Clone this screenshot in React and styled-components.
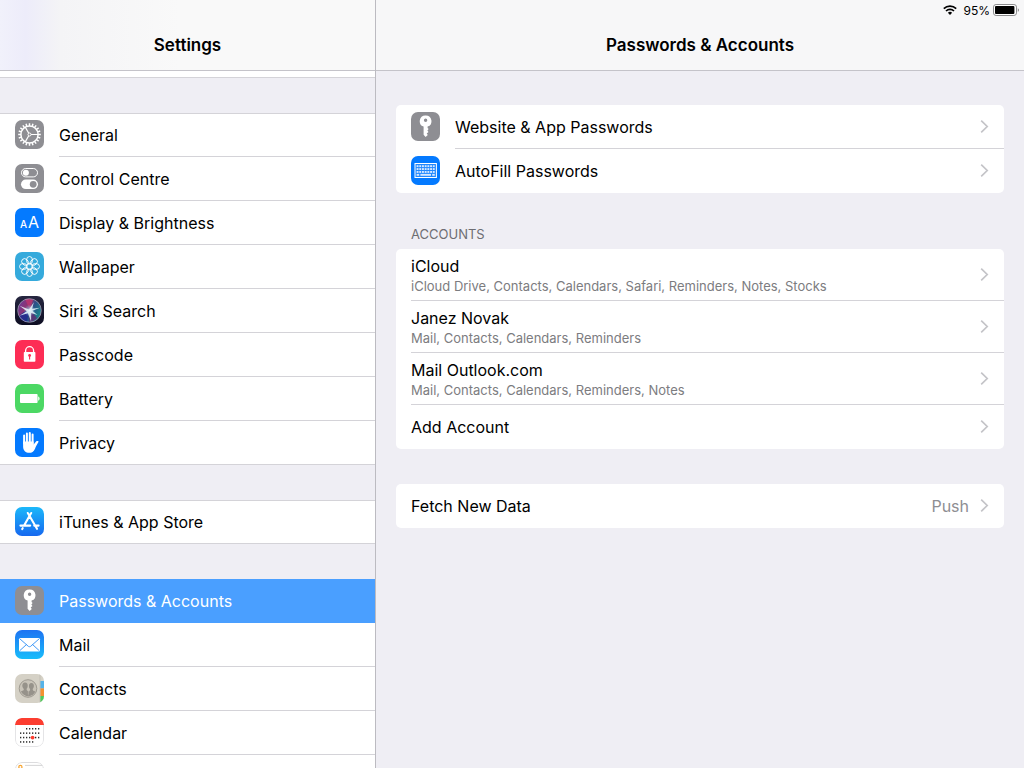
import React, { useState } from 'react'
import styled, { createGlobalStyle } from 'styled-components'

const GlobalStyle = createGlobalStyle`
  * {
    box-sizing: border-box;
  }
  body {
    margin: 0;
    background: #efeef4;
    color: #000;
    font-family: Inter, "Liberation Sans", sans-serif;
    font-size: 16px;
  }
  h1, h2, h3, p, ul {
    margin: 0;
    padding: 0;
  }
  ul {
    list-style: none;
  }
`

/* ---------- icons ---------- */

const range = (n) => Array.from({ length: n }, (_, i) => i)

const IconSvg = styled.svg`
  display: block;
  flex: none;
  width: 29px;
  height: 29px;
  margin-bottom: 1px;
  border-radius: 7px;
`

const Icon = ({ bg, children }) => (
  <IconSvg viewBox="0 0 29 29" aria-hidden="true">
    <rect width="29" height="29" fill={bg} />
    {children}
  </IconSvg>
)

const GeneralIcon = () => (
  <Icon bg="#8e8e93">
    <g stroke="#fff" fill="none">
      <circle cx="14.5" cy="14.5" r="8.6" strokeWidth="1.5" />
      {range(20).map((i) => (
        <path key={i} d="M14.5 3.2v2.8" strokeWidth="1.5" transform={`rotate(${i * 18} 14.5 14.5)`} />
      ))}
      <circle cx="14.5" cy="14.5" r="1.5" strokeWidth="1" />
      {[90, 210, 330].map((a) => (
        <path key={a} d="M14.5 13V6" strokeWidth="1.2" transform={`rotate(${a} 14.5 14.5)`} />
      ))}
    </g>
  </Icon>
)

const ControlIcon = () => (
  <Icon bg="#8e8e93">
    <rect x="6.5" y="4.5" width="16" height="8.4" rx="4.2" fill="none" stroke="#fff" strokeWidth="1" />
    <circle cx="10.9" cy="8.7" r="3" fill="#fff" />
    <rect x="6" y="15.5" width="17" height="9.6" rx="4.8" fill="#fff" />
    <circle cx="18.2" cy="20.3" r="3.4" fill="#8e8e93" />
  </Icon>
)

const DisplayIcon = () => (
  <Icon bg="#047aff">
    <g fill="#fff" fontFamily="Inter, sans-serif">
      <text x="5" y="20" fontSize="10" fontWeight="500">A</text>
      <text x="13" y="20" fontSize="16" fontWeight="400">A</text>
    </g>
  </Icon>
)

const WallpaperIcon = () => (
  <Icon bg="#35aadc">
    <g stroke="#fff" strokeWidth="0.9" fill="none">
      {range(8).map((i) => (
        <ellipse key={i} cx="14.5" cy="8.3" rx="3" ry="3.8" transform={`rotate(${i * 45} 14.5 14.5)`} />
      ))}
      <circle cx="14.5" cy="14.5" r="3" />
    </g>
  </Icon>
)

const SiriIcon = () => (
  <IconSvg viewBox="0 0 29 29" aria-hidden="true">
    <defs>
      <linearGradient id="siriBg" x1="0" y1="0" x2="0" y2="1">
        <stop offset="0" stopColor="#262740" />
        <stop offset="1" stopColor="#0d0d22" />
      </linearGradient>
      <radialGradient id="siriCore">
        <stop offset="0" stopColor="#fff" />
        <stop offset="0.3" stopColor="#c9e6f5" stopOpacity="0.6" />
        <stop offset="1" stopColor="#7fb4e0" stopOpacity="0" />
      </radialGradient>
      <linearGradient id="siriOrb" x1="0" y1="0.2" x2="1" y2="0.7">
        <stop offset="0" stopColor="#6a3a98" />
        <stop offset="0.35" stopColor="#8f3470" />
        <stop offset="0.6" stopColor="#2a5088" />
        <stop offset="1" stopColor="#178f8c" />
      </linearGradient>
    </defs>
    <rect width="29" height="29" fill="url(#siriBg)" />
    <circle cx="14.5" cy="14.5" r="11.5" fill="url(#siriOrb)" />
    <path d="M14 14C10 15 5 18 4 21a11.5 11.5 0 0 0 8 5z" fill="#1c2c90" opacity="0.85" />
    <path d="M15 14l3-10a11.5 11.5 0 0 0-8-1z" fill="#c2356f" opacity="0.75" />
    <path d="M15 14l7 8a11.5 11.5 0 0 1-8 4z" fill="#6a2870" opacity="0.75" />
    <circle cx="14.5" cy="14.5" r="6" fill="url(#siriCore)" />
    <path d="M14 13.4L4.5 9.8l7.4 5.4-7.4 4.6 8.4-2.6 3.2 8.4.1-8.6 6.2 2-5-4.2 7.6-3-7.8 1 1.6-6.6z" fill="#e6f7fa" opacity="0.85" />
    <circle cx="14.5" cy="14.5" r="11.8" fill="none" stroke="#b6adc9" strokeWidth="0.7" />
  </IconSvg>
)

const PasscodeIcon = () => (
  <Icon bg="#fd2d55">
    <path d="M10.6 13v-2.3a4 4 0 0 1 8 0V13" fill="none" stroke="#fff" strokeWidth="1.3" />
    <rect x="8.8" y="12" width="11.6" height="9.8" rx="0.8" fill="#fff" />
    <circle cx="14.6" cy="15.5" r="1.4" fill="#fd2d55" />
    <path d="M14.6 15.5v4" stroke="#fd2d55" strokeWidth="1.1" />
  </Icon>
)

const BatteryAppIcon = () => (
  <Icon bg="#4cd864">
    <rect x="5" y="10" width="17.6" height="9" rx="1" fill="#fff" />
    <path d="M23.2 12.4c1.8.3 1.8 3.9 0 4.2z" fill="#fff" />
  </Icon>
)

const PrivacyIcon = () => (
  <Icon bg="#047aff">
    <g stroke="#fff" strokeWidth="2" strokeLinecap="round">
      <path d="M9.1 7.6v8M11.9 5.4v9M14.8 5v9M17.6 6.4v9" />
    </g>
    <path
      d="M8.1 13.4h10.5v3.2l2.5-3.2c.9-.9 2.6-.5 2.5.3-1.4 2-2.7 4.8-3.7 7.2-1.2 2.7-3.2 3.9-5.6 3.9-3.6 0-6.2-2.2-6.2-6.4z"
      fill="#fff"
    />
  </Icon>
)

const StoreIcon = () => (
  <IconSvg viewBox="0 0 29 29" aria-hidden="true">
    <defs>
      <linearGradient id="storeBg" x1="0" y1="0" x2="0" y2="1">
        <stop offset="0" stopColor="#1cb8fa" />
        <stop offset="1" stopColor="#1668ef" />
      </linearGradient>
    </defs>
    <rect width="29" height="29" fill="url(#storeBg)" />
    <g stroke="#fff" strokeWidth="2.1" strokeLinecap="round" fill="none">
      <path d="M16.2 6L9.2 18.2M12.8 6l9.2 15.8M5.4 18.6h9.8M19.2 18.6h4.4M7.7 21.2l-.5.9" />
    </g>
  </IconSvg>
)

const KeyIcon = () => (
  <Icon bg="#8e8e93">
    <path
      fill="#fff"
      fillRule="evenodd"
      d="M14.6 3.5a5.7 5.7 0 0 0-2 11.1v8.2l2 2.2 2.2-2-1.1-1.4 1.8-1.7-1.1-1.5 1.2-1.3-1-1.2v-1.3a5.7 5.7 0 0 0-2-11.1zm0 3a1.7 1.7 0 1 1 0 3.4 1.7 1.7 0 0 1 0-3.4z"
    />
  </Icon>
)

const MailIcon = () => (
  <IconSvg viewBox="0 0 29 29" aria-hidden="true">
    <defs>
      <linearGradient id="mailBg" x1="0" y1="0" x2="0" y2="1">
        <stop offset="0" stopColor="#1e73f2" />
        <stop offset="1" stopColor="#18bdfb" />
      </linearGradient>
    </defs>
    <rect width="29" height="29" fill="url(#mailBg)" />
    <rect x="4" y="8" width="21" height="13.4" rx="1.2" fill="#fff" />
    <path d="M4.6 8.6l8.6 7.6c.8.7 1.8.7 2.6 0l8.6-7.6M4.6 20.8l7-6.4M24.4 20.8l-7-6.4" fill="none" stroke="#2c8df5" strokeWidth="0.9" />
  </IconSvg>
)

const ContactsIcon = () => (
  <Icon bg="#d5d1c6">
    <rect x="25.2" y="7" width="3.8" height="7.4" fill="#56b3e8" />
    <rect x="25.2" y="14.4" width="3.8" height="7.6" fill="#f39130" />
    <rect x="25.2" y="22" width="3.8" height="7" fill="#4fcb5b" />
    <path d="M25 0v29" stroke="#bdb9af" strokeWidth="0.7" />
    <circle cx="13" cy="14.5" r="8.8" fill="#c9c4b9" stroke="#98948b" strokeWidth="0.9" />
    <g fill="#96928a">
      <path d="M10 8.4c2 0 2.9 1.5 2.8 3.2 0 1.5-.5 2.6-1.2 3.2 0 1.6.2 1.7 2 2.6v4.9c-3.2 0-6-1.5-7.7-4.7l2.6-1.3c.4-.2.4-.8.1-1.6-.8-.7-1.3-1.8-1.3-3.1 0-1.8 1-3.2 2.7-3.2z" />
      <path d="M16.3 8.9c1.8 0 2.6 1.3 2.6 2.9 0 1.4-.5 2.5-1.2 3.1 0 1.3.2 1.6 2.7 2.6-1.5 2.9-3.8 4.6-7.1 4.8v-4.6c1.6-.8 1.8-1.3 1.8-2.7-.7-.6-1.2-1.7-1.2-3 0-1.8.8-3.1 2.4-3.1z" />
    </g>
    <path d="M13.3 9.6v11" stroke="#c9c4b9" strokeWidth="0.5" />
  </Icon>
)

// start and end columns of each week in the small month grid
const weeks = [[2, 7], [0, 7], [0, 7], [0, 5]]

const CalendarIcon = () => (
  <Icon bg="#fff">
    <rect x="0.5" y="0.5" width="28" height="28" rx="6.5" fill="none" stroke="#e4e4e6" strokeWidth="1" />
    <path d="M0 7V6a6 6 0 0 1 6-6h17a6 6 0 0 1 6 6v1z" fill="#fc3d30" />
    {weeks.map(([from, to], row) =>
      range(to - from).map((i) => (
        <rect key={`${row}-${i}`} x={5 + (from + i) * 3} y={10 + row * 4.4} width="1.3" height="1.5" fill="#2b2b2b" />
      ))
    )}
    <circle cx="17.6" cy="19.6" r="1.9" fill="#fc3d30" />
  </Icon>
)

const NotesIcon = () => (
  <Icon bg="#fff">
    <rect x="0.5" y="0.5" width="28" height="28" rx="6.5" fill="none" stroke="#dcdcde" strokeWidth="1" />
    <circle cx="5.4" cy="5" r="1.6" fill="none" stroke="#f7a531" strokeWidth="1.2" />
    <path d="M10 3.4h17" stroke="#c9c9cc" strokeWidth="0.8" />
  </Icon>
)

const KeyboardIcon = () => (
  <Icon bg="#047aff">
    <rect x="4" y="7.5" width="21.4" height="14" fill="#2088ff" stroke="#fff" strokeWidth="1" />
    <g fill="#d6e8ff">
      {range(3).map((row) =>
        range(7).map((i) => (
          <rect key={`${row}-${i}`} x={5.6 + i * 2.7} y={9.2 + row * 2.9} width="1.9" height="1.9" />
        ))
      )}
      <rect x="5.6" y="17.9" width="2.6" height="1.9" />
      <rect x="9.4" y="17.9" width="10.6" height="1.9" />
      <rect x="21.2" y="17.9" width="2.6" height="1.9" />
    </g>
  </Icon>
)

const ChevronSvg = styled.svg`
  display: block;
  flex: none;
  width: 9px;
  height: 13px;
`

const Chevron = () => (
  <ChevronSvg viewBox="0 0 9 13" aria-hidden="true">
    <path d="M1.2 0.7L7.2 6.5l-6 5.8" fill="none" stroke="#c4c4c8" strokeWidth="1.7" />
  </ChevronSvg>
)

const WifiIcon = () => (
  <svg width="14" height="10" viewBox="0 0 14 10" aria-hidden="true">
    <g fill="none" stroke="#000" strokeWidth="1.7">
      <path d="M0.8 3.7a9 9 0 0 1 12.4 0" />
      <path d="M3 6a5.8 5.8 0 0 1 8 0" />
    </g>
    <path d="M4.9 7.8a3 3 0 0 1 4.2 0L7 10z" />
  </svg>
)

const BatteryStatus = () => (
  <svg width="27" height="12" viewBox="0 0 27 12" aria-hidden="true">
    <rect x="0.5" y="0.5" width="23" height="11" rx="2.6" fill="#fff" stroke="#8b8b8d" strokeWidth="1" />
    <rect x="2" y="2" width="19.4" height="8" rx="1" />
    <path d="M24.8 4.2c1.6.4 1.6 3.2 0 3.6z" fill="#8b8b8d" />
  </svg>
)

/* ---------- data ---------- */

const menu = [
  [
    { name: 'General', Glyph: GeneralIcon },
    { name: 'Control Centre', Glyph: ControlIcon },
    { name: 'Display & Brightness', Glyph: DisplayIcon },
    { name: 'Wallpaper', Glyph: WallpaperIcon },
    { name: 'Siri & Search', Glyph: SiriIcon },
    { name: 'Passcode', Glyph: PasscodeIcon },
    { name: 'Battery', Glyph: BatteryAppIcon },
    { name: 'Privacy', Glyph: PrivacyIcon },
  ],
  [{ name: 'iTunes & App Store', Glyph: StoreIcon }],
  [
    { name: 'Passwords & Accounts', Glyph: KeyIcon },
    { name: 'Mail', Glyph: MailIcon },
    { name: 'Contacts', Glyph: ContactsIcon },
    { name: 'Calendar', Glyph: CalendarIcon },
    { name: 'Notes', Glyph: NotesIcon, iconOnly: true },
  ],
]

const passwords = [
  { name: 'Website & App Passwords', Glyph: KeyIcon },
  { name: 'AutoFill Passwords', Glyph: KeyboardIcon },
]

const accounts = [
  { name: 'iCloud', detail: 'iCloud Drive, Contacts, Calendars, Safari, Reminders, Notes, Stocks' },
  { name: 'Janez Novak', detail: 'Mail, Contacts, Calendars, Reminders' },
  { name: 'Mail Outlook.com', detail: 'Mail, Contacts, Calendars, Reminders, Notes' },
  { name: 'Add Account' },
]

const CardRow = ({ name, detail, value, Glyph }) => (
  <Row href="#">
    {Glyph && <Glyph />}
    <RowBody $tall={Boolean(detail)}>
      <RowText>
        <RowTitle>{name}</RowTitle>
        {detail && <RowDetail>{detail}</RowDetail>}
      </RowText>
      {value && <RowValue>{value}</RowValue>}
      <Chevron />
    </RowBody>
  </Row>
)

const App = () => {
  const [active, setActive] = useState('Passwords & Accounts')

  return (
    <Container>
      <GlobalStyle />
      <Sidebar>
        <Header $tinted>
          <StatusBar />
          <Title>Settings</Title>
        </Header>
        <MenuScroll>
          <MenuTail />
          {menu.map((group, i) => (
            <MenuGroup key={i}>
              {group.map(({ name, Glyph, iconOnly }) => (
                <li key={name}>
                  <MenuLink href="#" aria-label={name} $active={name === active} onClick={() => setActive(name)}>
                    <Glyph />
                    <MenuLabel>{!iconOnly && name}</MenuLabel>
                  </MenuLink>
                </li>
              ))}
            </MenuGroup>
          ))}
        </MenuScroll>
      </Sidebar>
      <Detail>
        <Header>
          <StatusBar>
            <WifiIcon />
            <Charge>95%</Charge>
            <BatteryStatus />
          </StatusBar>
          <Title>Passwords &amp; Accounts</Title>
        </Header>
        <Content>
          <Card>
            {passwords.map((item) => <CardRow key={item.name} {...item} />)}
          </Card>
          <section>
            <CardHeading>ACCOUNTS</CardHeading>
            <Card>
              {accounts.map((item) => <CardRow key={item.name} {...item} />)}
            </Card>
          </section>
          <Card $spaced>
            <CardRow name="Fetch New Data" value="Push" />
          </Card>
        </Content>
      </Detail>
    </Container>
  )
}

const Container = styled.div`
  display: grid;
  grid-template-columns: minmax(240px, 376px) 1fr;
  height: 100vh;
  overflow: hidden;
`

const Sidebar = styled.nav`
  display: flex;
  flex-direction: column;
  min-height: 0;
  border-right: 1px solid #bcbbc1;
`

const Detail = styled.main`
  display: flex;
  flex-direction: column;
  min-width: 0;
  min-height: 0;
`

const Header = styled.header`
  flex: none;
  border-bottom: 1px solid #c4c3c9;
  background: ${({ $tinted }) =>
    $tinted ? 'linear-gradient(90deg, #f1f1fb 0, #edecfa 26px, #f4f4f6 60px, #f9f9f9 180px)' : '#f7f7f8'};
`

const StatusBar = styled.div`
  display: flex;
  align-items: center;
  justify-content: flex-end;
  gap: 6px;
  height: 20px;
  padding: 0 4px;
`

const Charge = styled.span`
  margin-right: -3px;
  font-size: 12px;
`

const Title = styled.h1`
  font-size: 17px;
  font-weight: 600;
  line-height: 50px;
  text-align: center;
`

const MenuScroll = styled.div`
  flex: 1;
  min-height: 0;
  overflow: hidden;
`

const MenuTail = styled.div`
  height: 7px;
  background: #fff;
  border-bottom: 1px solid #d4d3d8;
`

const MenuGroup = styled.ul`
  margin-top: 35px;
  background: #fff;
  box-shadow: inset 0 1px #d4d3d8, inset 0 -1px #d4d3d8;
`

const MenuLabel = styled.span`
  flex: 1;
  height: 44px;
  line-height: 45px;
  border-bottom: 1px solid #d4d3d8;
`

const MenuLink = styled.a`
  display: flex;
  align-items: center;
  gap: 15px;
  height: 44px;
  padding-left: 15px;
  color: ${({ $active }) => ($active ? '#fff' : '#000')};
  background: ${({ $active }) => ($active ? '#4a9fff' : 'transparent')};
  text-decoration: none;
  ${MenuLabel} {
    border-color: ${({ $active }) => ($active ? 'transparent' : '#d4d3d8')};
  }
  li:last-child > & ${MenuLabel} {
    border-color: transparent;
  }
`

const Content = styled.div`
  flex: 1;
  padding: 34px 20px;
  overflow: auto;
`

const Card = styled.div`
  margin-top: ${({ $spaced }) => ($spaced ? '35px' : '0')};
  background: #fff;
  border-radius: 5px;
  overflow: hidden;
`

const CardHeading = styled.h2`
  padding: 31px 15px 5px;
  color: #6d6d72;
  font-size: 13px;
  font-weight: 400;
  line-height: 20px;
`

const RowBody = styled.div`
  display: flex;
  flex: 1;
  align-items: center;
  gap: 11px;
  min-width: 0;
  height: ${({ $tall }) => ($tall ? '52px' : '44px')};
  padding-right: 15px;
  border-bottom: 1px solid #d4d3d8;
`

const Row = styled.a`
  display: flex;
  align-items: center;
  gap: 15px;
  padding-left: 15px;
  color: #000;
  text-decoration: none;
  &:last-child ${RowBody} {
    border-color: transparent;
  }
`

const RowText = styled.div`
  flex: 1;
  min-width: 0;
`

const RowTitle = styled.h3`
  font-size: 16px;
  font-weight: 400;
  line-height: 22px;
`

const RowDetail = styled.p`
  color: #7c7c80;
  font-size: 13px;
  line-height: 18px;
`

const RowValue = styled.span`
  color: #8e8e93;
`

export default App
